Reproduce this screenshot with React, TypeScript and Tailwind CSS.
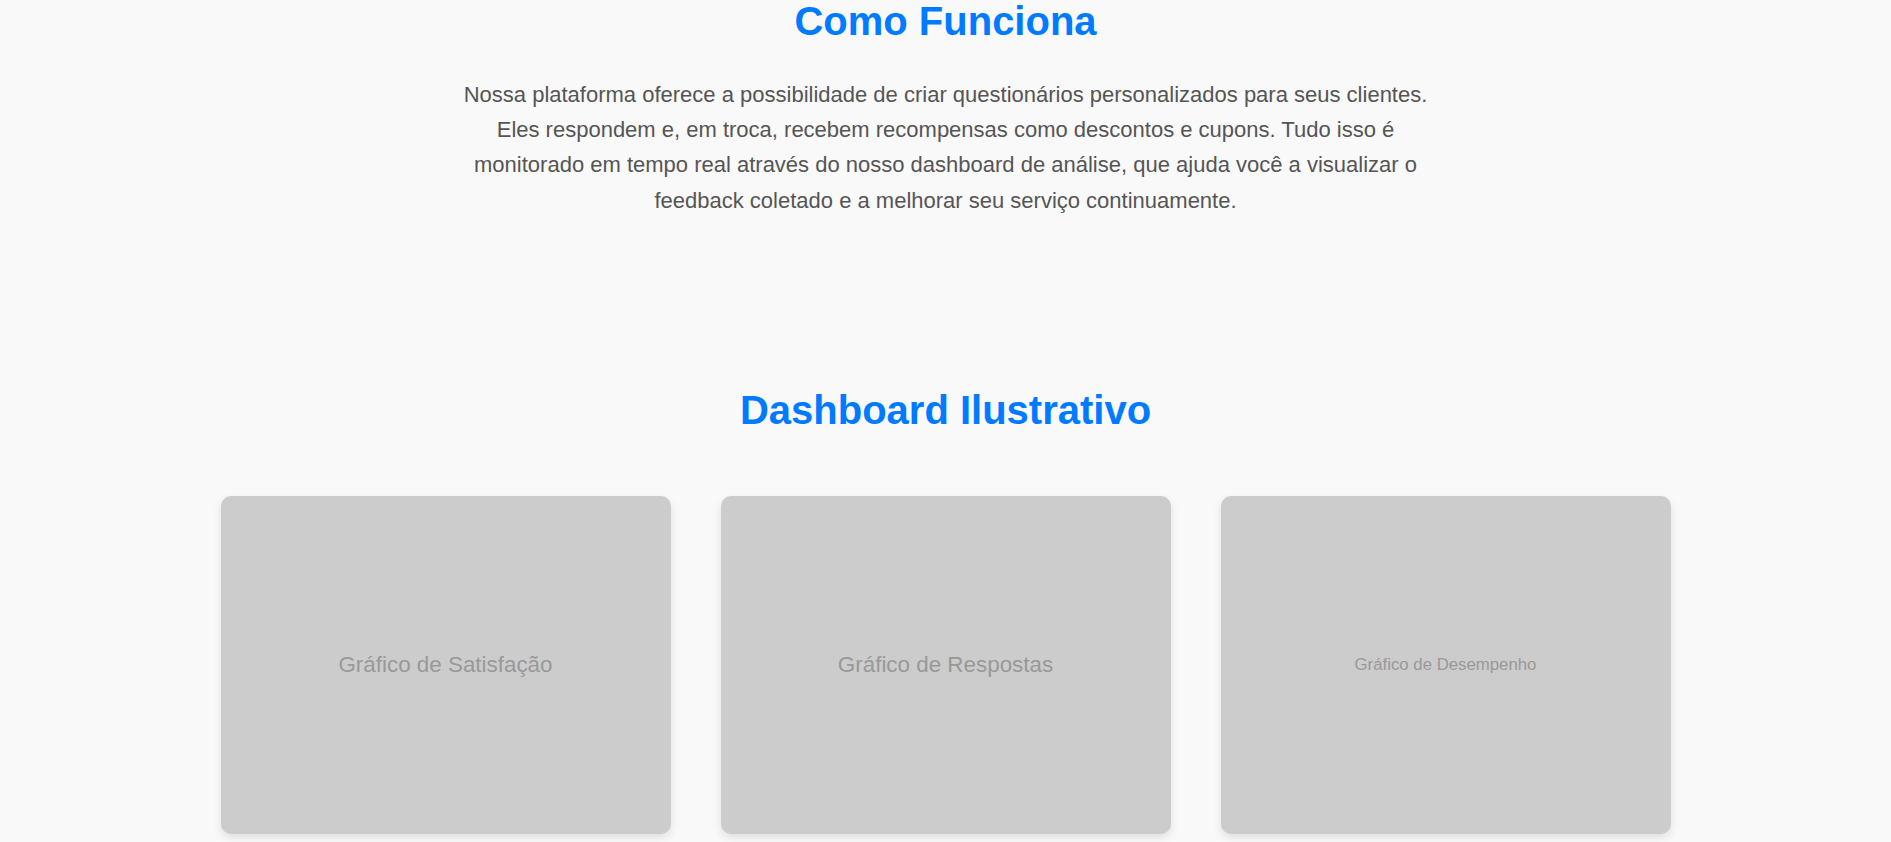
const charts = [
  { id: "satisfacao", label: "Gráfico de Satisfação", size: "text-[22.4px]" },
  { id: "respostas", label: "Gráfico de Respostas", size: "text-[22.4px]" },
  { id: "desempenho", label: "Gráfico de Desempenho", size: "text-[16.8px]" },
];

export default function App() {
  return (
    <div
      className="min-h-screen overflow-hidden bg-[#f9f9f9] text-[#555]"
      style={{ fontFamily: '"Liberation Sans", Arial, sans-serif' }}
    >
      <section className="flex flex-col items-center text-center">
        <h2 className="mt-[-2px] text-[40px] font-bold leading-[46px] text-[#007bff]">
          Como Funciona
        </h2>
        <p className="mt-[33px] max-w-[1000px] text-[22px] leading-[35.2px] text-[#555]">
          Nossa plataforma oferece a possibilidade de criar questionários
          personalizados para seus clientes. Eles respondem e, em troca,
          recebem recompensas como descontos e cupons. Tudo isso é monitorado
          em tempo real através do nosso dashboard de análise, que ajuda você
          a visualizar o feedback coletado e a melhorar seu serviço
          continuamente.
        </p>
      </section>

      <section className="mt-[169px] flex flex-col items-center">
        <h2 className="text-[40px] font-bold leading-[46px] text-[#007bff]">
          Dashboard Ilustrativo
        </h2>
        <div className="mt-[63px] grid w-[1450px] grid-cols-3 gap-[50px]">
          {charts.map((chart) => (
            <div
              key={chart.id}
              className="flex h-[338px] items-center justify-center rounded-[10px] bg-[#ccc] shadow-[0_4px_8px_rgba(0,0,0,0.1)]"
            >
              <span className={`${chart.size} text-[#999]`}>{chart.label}</span>
            </div>
          ))}
        </div>
      </section>
    </div>
  );
}
